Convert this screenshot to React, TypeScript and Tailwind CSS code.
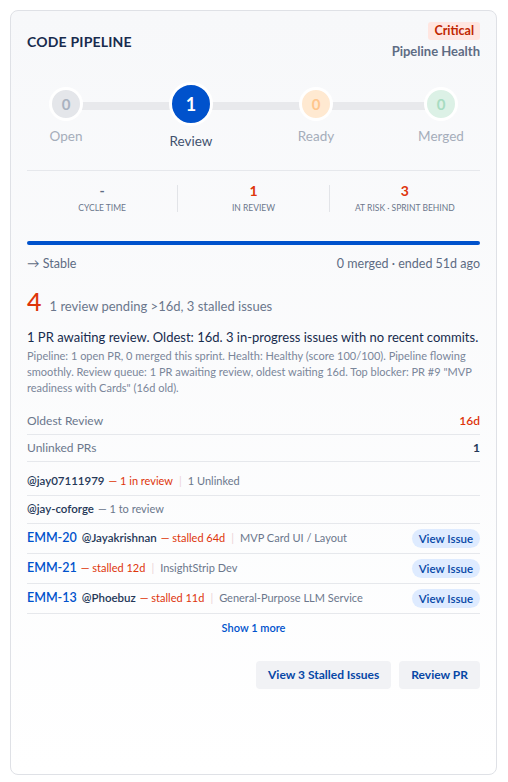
import React from "react";

const font = { fontFamily: 'Lato, "Noto Sans", sans-serif' };

function Step({ n, label, kind }: { n: number; label: string; kind: "open" | "review" | "ready" | "merged" }) {
  const circle =
    kind === "review"
      ? "w-[44px] h-[44px] bg-[#0052cc] text-white text-[18px]"
      : kind === "open"
      ? "w-[34px] h-[34px] bg-[#e4e6ea] text-[#a9b2c0] text-[15px]"
      : kind === "ready"
      ? "w-[34px] h-[34px] bg-[#ffe9d1] text-[#ffc58c] text-[15px]"
      : "w-[34px] h-[34px] bg-[#dcf1e6] text-[#a7dcc1] text-[15px]";
  const lab = kind === "review" ? "text-[#42526e]" : "text-[#a5adba]";
  return (
    <div className="relative z-10 flex w-[78px] flex-col items-center gap-[6px]">
      <div className={`flex items-center justify-center rounded-full border-[3px] border-white font-bold ${circle}`}>{n}</div>
      <div className={`text-[13.5px] leading-[18px] ${lab}`}>{label}</div>
    </div>
  );
}

function Stat({ v, label, red }: { v: string; label: string; red?: boolean }) {
  return (
    <div className="flex flex-1 flex-col items-center">
      <div className={`text-[14px] font-bold leading-[18px] ${red ? "text-[#de350b]" : "text-[#5e6c84]"}`}>{v}</div>
      <div className="mt-[1px] text-[8.5px] uppercase leading-[14px] text-[#6b778c]">{label}</div>
    </div>
  );
}

function Sep() {
  return <span className="mx-[6px] text-[11px] text-[#ecd3d8]">|</span>;
}

function IssueRow({ id, user, stalled, desc }: { id: string; user?: string; stalled: string; desc: string }) {
  return (
    <div className="flex h-[30px] items-center justify-between border-b border-[#e6e8ec]">
      <div className="flex items-center whitespace-nowrap">
        <span className="text-[12.5px] font-semibold text-[#0052cc]">{id}</span>
        {user && <span className="ml-[5px] text-[11.5px] font-semibold text-[#253858]">{user}</span>}
        <span className="ml-[4px] text-[11px] text-[#de350b]">— {stalled}</span>
        <Sep />
        <span className="text-[11px] text-[#6b778c]">{desc}</span>
      </div>
      <button className="rounded-full bg-[#deebff] px-[7px] py-[1px] text-[11.5px] font-semibold leading-[17px] text-[#0747a6]">View Issue</button>
    </div>
  );
}

export default function App() {
  return (
    <div style={font} className="bg-white p-[10px] pr-[11px]">
      <div className="flex h-[765px] flex-col rounded-[8px] border border-[#dfe1e6] bg-gradient-to-b from-[#f7f8fa] to-white px-[16px] pt-[11px]">
        {/* header */}
        <div className="flex items-center justify-between">
          <div className="text-[14px] font-bold tracking-[0.2px] text-[#172b4d]">CODE PIPELINE</div>
          <div className="flex flex-col items-end">
            <span className="rounded-[3px] bg-[#ffe6e1] px-[6px] text-[12.5px] font-bold leading-[18px] text-[#bf2600]">Critical</span>
            <span className="mt-[2px] text-[13px] font-bold leading-[18px] text-[#5e6c84]">Pipeline Health</span>
          </div>
        </div>

        {/* stepper */}
        <div className="relative mt-[22px] flex items-center justify-between">
          <div className="absolute left-[39px] right-[39px] top-[20px] h-[8px] bg-[#e8e9ec]" />
          <Step n={0} label="Open" kind="open" />
          <Step n={1} label="Review" kind="review" />
          <Step n={0} label="Ready" kind="ready" />
          <Step n={0} label="Merged" kind="merged" />
        </div>

        {/* stats */}
        <div className="mt-[20px] flex border-t border-[#e6e8ec] pb-[18px] pt-[11px]">
          <Stat v="-" label="Cycle Time" />
          <div className="my-[3px] w-px bg-[#e2e4e8]" />
          <Stat v="1" label="In Review" red />
          <div className="my-[3px] w-px bg-[#e2e4e8]" />
          <Stat v="3" label="At Risk · Sprint Behind" red />
        </div>

        {/* bar */}
        <div className="mt-[8px] h-[4px] rounded-full bg-[#0052cc]" />
        <div className="mt-[11px] flex items-center justify-between text-[12.5px] leading-[16px] text-[#5e6c84]">
          <span>→ Stable</span>
          <span>0 merged · ended 51d ago</span>
        </div>

        {/* summary */}
        <div className="mt-[15px] flex items-baseline">
          <span className="text-[25px] font-medium leading-[28px] text-[#de350b]">4</span>
          <span className="ml-[8px] text-[13px] text-[#6b778c]">1 review pending &gt;16d, 3 stalled issues</span>
        </div>
        <div className="mt-[10px] whitespace-nowrap text-[13px] leading-[20px] text-[#172b4d]">1 PR awaiting review. Oldest: 16d. 3 in-progress issues with no recent commits.</div>
        <div className="mt-[1px] text-[11px] leading-[16px] text-[#7a869a]">
          Pipeline: 1 open PR, 0 merged this sprint. Health: Healthy (score 100/100). Pipeline flowing smoothly. Review queue: 1 PR awaiting review, oldest waiting 16d. Top blocker: PR #9 "MVP readiness with Cards" (16d old).
        </div>

        {/* kv rows */}
        <div className="mt-[12px]">
          <div className="flex h-[27px] items-center justify-between border-b border-[#e6e8ec] text-[12px]">
            <span className="text-[#6b778c]">Oldest Review</span>
            <span className="font-semibold text-[#de350b]">16d</span>
          </div>
          <div className="flex h-[27px] items-center justify-between border-b border-[#e6e8ec] text-[12px]">
            <span className="text-[#6b778c]">Unlinked PRs</span>
            <span className="font-bold text-[#253858]">1</span>
          </div>
        </div>

        {/* people */}
        <div className="mt-[6px]">
          <div className="flex h-[28px] items-center whitespace-nowrap border-b border-[#e6e8ec]">
            <span className="text-[11.5px] font-semibold text-[#253858]">@jay07111979</span>
            <span className="ml-[4px] text-[11px] text-[#de350b]">— 1 in review</span>
            <Sep />
            <span className="text-[11px] text-[#6b778c]">1 Unlinked</span>
          </div>
          <div className="flex h-[28px] items-center whitespace-nowrap border-b border-[#e6e8ec]">
            <span className="text-[11.5px] font-semibold text-[#253858]">@jay-coforge</span>
            <span className="ml-[4px] text-[11px] text-[#6b778c]">— 1 to review</span>
          </div>
          <IssueRow id="EMM-20" user="@Jayakrishnan" stalled="stalled 64d" desc="MVP Card UI / Layout" />
          <IssueRow id="EMM-21" stalled="stalled 12d" desc="InsightStrip Dev" />
          <IssueRow id="EMM-13" user="@Phoebuz" stalled="stalled 11d" desc="General-Purpose LLM Service" />
        </div>
        <div className="mt-[6px] text-center text-[11px] font-semibold leading-[16px] text-[#0052cc]">Show 1 more</div>

        <div className="mt-[25px] flex justify-end gap-[8px]">
          <button className="h-[28px] rounded-[4px] bg-[#f1f2f5] px-[12px] text-[12px] font-bold text-[#0747a6]">View 3 Stalled Issues</button>
          <button className="h-[28px] rounded-[4px] bg-[#f1f2f5] px-[12px] text-[12px] font-bold text-[#0747a6]">Review PR</button>
        </div>
      </div>
    </div>
  );
}
